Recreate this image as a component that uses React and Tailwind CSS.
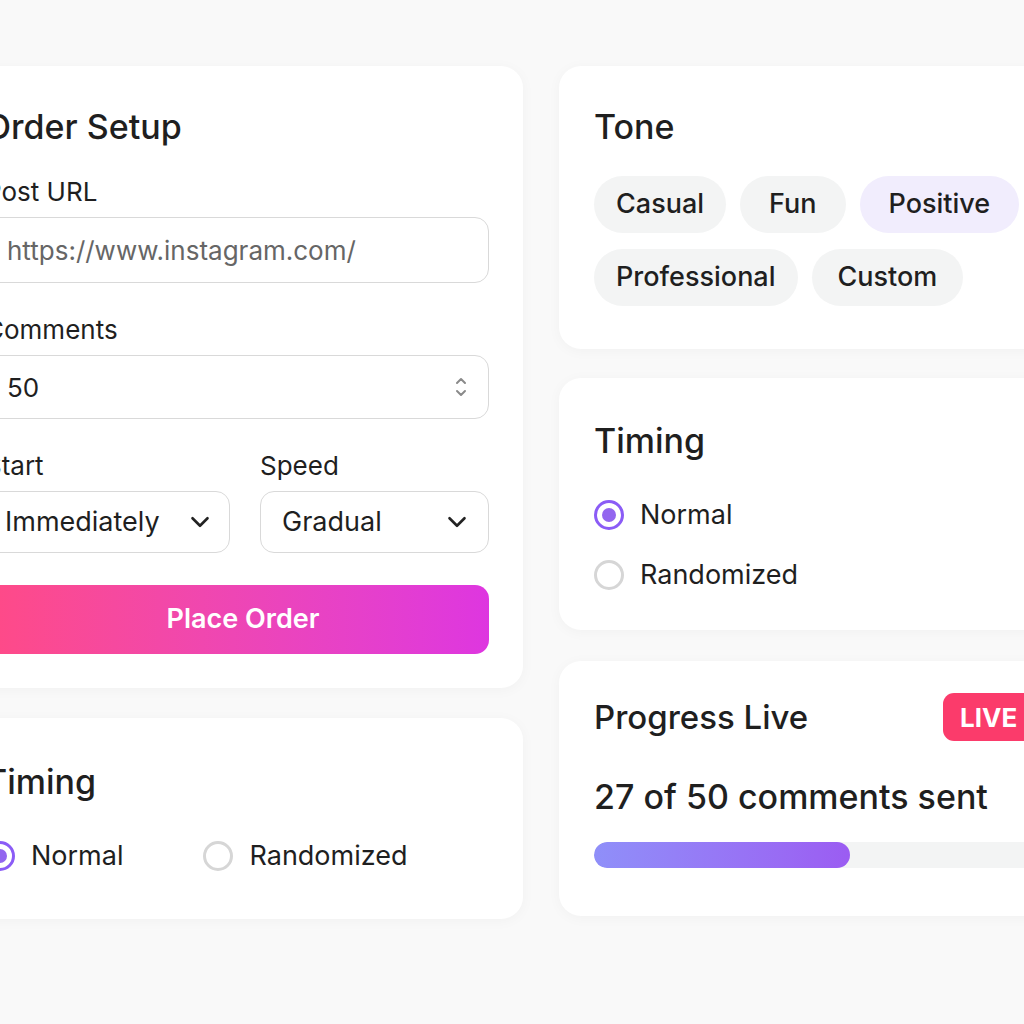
import React from "react";

const font = { fontFamily: "Inter, 'Noto Sans', 'Liberation Sans', sans-serif" };

function Chevron() {
  return (
    <svg width="30" height="30" viewBox="0 0 24 24" fill="none" stroke="#222" strokeWidth="2.1" strokeLinecap="round" strokeLinejoin="round">
      <path d="M6 9l6 6 6-6" />
    </svg>
  );
}

function Stepper() {
  return (
    <svg width="14" height="24" viewBox="0 0 14 24" fill="none" stroke="#8a8a8a" strokeWidth="2" strokeLinecap="round" strokeLinejoin="round">
      <path d="M3 8l4-4 4 4" />
      <path d="M3 16l4 4 4-4" />
    </svg>
  );
}

function Radio({ checked, label }) {
  return (
    <div className="flex items-center gap-[16px] h-[30px]">
      {checked ? (
        <span className="w-[30px] h-[30px] rounded-full border-[3px] border-[#8b5cf6] flex items-center justify-center shrink-0">
          <span className="w-[14px] h-[14px] rounded-full bg-[#9366ef]" />
        </span>
      ) : (
        <span className="w-[30px] h-[30px] rounded-full border-[3px] border-[#d6d6d6] shrink-0" />
      )}
      <span className="text-[27px] leading-[30px] text-[#1f1f1f]">{label}</span>
    </div>
  );
}

function Label({ children }) {
  return <div className="text-[26px] leading-[30px] text-[#1f1f1f] mb-[10px]">{children}</div>;
}

function Chip({ children, className = "" }) {
  return (
    <div className={`h-[57px] rounded-full flex items-center text-[27px] font-medium text-[#1f1f1f] ${className}`}>
      {children}
    </div>
  );
}

const card = "bg-white rounded-[22px] shadow-[0_2px_14px_rgba(0,0,0,0.035)]";

export default function App() {
  return (
    <div className="w-full h-[1024px] bg-[#f9f9f9] overflow-hidden" style={font}>
      <div className="flex items-start gap-[36px] ml-[-49px] pt-[66px]">
        {/* Left column */}
        <div className="w-[572px] shrink-0 flex flex-col gap-[30px]">
          <div className={`${card} px-[34px] pt-[41px] pb-[34px]`}>
            <h2 className="text-[34px] leading-[40px] font-medium text-[#1f1f1f]">Order Setup</h2>
            <div className="mt-[30px] flex flex-col gap-[32px]">
              <div>
                <Label>Post URL</Label>
                <div className="h-[66px] rounded-[14px] border border-[#d9d9d9] flex items-center px-[21px] text-[26px] text-[#666]">
                  https://www.instagram.com/
                </div>
              </div>
              <div>
                <Label>Comments</Label>
                <div className="h-[64px] rounded-[14px] border border-[#d9d9d9] flex items-center justify-between pl-[21px] pr-[20px] text-[26px] text-[#1f1f1f]">
                  <span>50</span>
                  <Stepper />
                </div>
              </div>
              <div className="grid grid-cols-[245px_229px] gap-x-[30px]">
                <div>
                  <Label>Start</Label>
                  <div className="h-[62px] rounded-[14px] border border-[#d9d9d9] flex items-center justify-between pl-[19px] pr-[14px] text-[27px] text-[#1f1f1f]">
                    <span>Immediately</span>
                    <Chevron />
                  </div>
                </div>
                <div>
                  <Label>Speed</Label>
                  <div className="h-[62px] rounded-[14px] border border-[#d9d9d9] flex items-center justify-between pl-[21px] pr-[16px] text-[27px] text-[#1f1f1f]">
                    <span>Gradual</span>
                    <Chevron />
                  </div>
                </div>
              </div>
              <button className="h-[69px] w-full rounded-[14px] bg-gradient-to-r from-[#ff4a86] to-[#de36e0] text-white text-[27px] font-semibold flex items-center justify-center pl-[12px]">
                Place Order
              </button>
            </div>
          </div>

          <div className={`${card} px-[34px] pt-[44px] pb-[48px]`}>
            <h2 className="text-[34px] leading-[40px] font-medium text-[#1f1f1f]">Timing</h2>
            <div className="mt-[39px] flex items-center gap-[80px]">
              <Radio checked label="Normal" />
              <Radio label="Randomized" />
            </div>
          </div>
        </div>

        {/* Right column */}
        <div className="w-[572px] shrink-0 flex flex-col">
          <div className={`${card} px-[35px] pt-[41px] pb-[43px]`}>
            <h2 className="text-[34px] leading-[40px] font-medium text-[#1f1f1f]">Tone</h2>
            <div className="mt-[29px] flex flex-wrap gap-x-[14px] gap-y-[16px]">
              <Chip className="bg-[#f3f4f4] px-[22px]">Casual</Chip>
              <Chip className="bg-[#f3f4f4] px-[29px]">Fun</Chip>
              <Chip className="bg-[#f1edfd] px-[29px]">Positive</Chip>
              <Chip className="bg-[#f3f4f4] px-[22px]">Professional</Chip>
              <Chip className="bg-[#f3f4f4] px-[26px]">Custom</Chip>
            </div>
          </div>

          <div className={`${card} mt-[29px] px-[35px] pt-[43px] pb-[40px]`}>
            <h2 className="text-[34px] leading-[40px] font-medium text-[#1f1f1f]">Timing</h2>
            <div className="mt-[39px] flex flex-col gap-[30px]">
              <Radio checked label="Normal" />
              <Radio label="Randomized" />
            </div>
          </div>

          <div className={`${card} mt-[31px] px-[35px] pt-[32px] pb-[48px]`}>
            <div className="grid grid-cols-[349px_auto] items-center">
              <h2 className="text-[33px] leading-[40px] font-medium text-[#1f1f1f]">Progress Live</h2>
              <span className="w-fit h-[48px] px-[17px] rounded-[11px] bg-[#fb3b6b] text-white text-[26px] font-bold flex items-center">
                LIVE
              </span>
            </div>
            <div className="mt-[36px] text-[34px] leading-[40px] font-medium text-[#1f1f1f]">27 of 50 comments sent</div>
            <div className="mt-[25px] h-[26px] rounded-full bg-[#f3f4f4] overflow-hidden">
              <div className="h-full rounded-full bg-gradient-to-r from-[#8f8ff9] to-[#9b5cf2]" style={{ width: "51%" }} />
            </div>
          </div>
        </div>
      </div>
    </div>
  );
}
